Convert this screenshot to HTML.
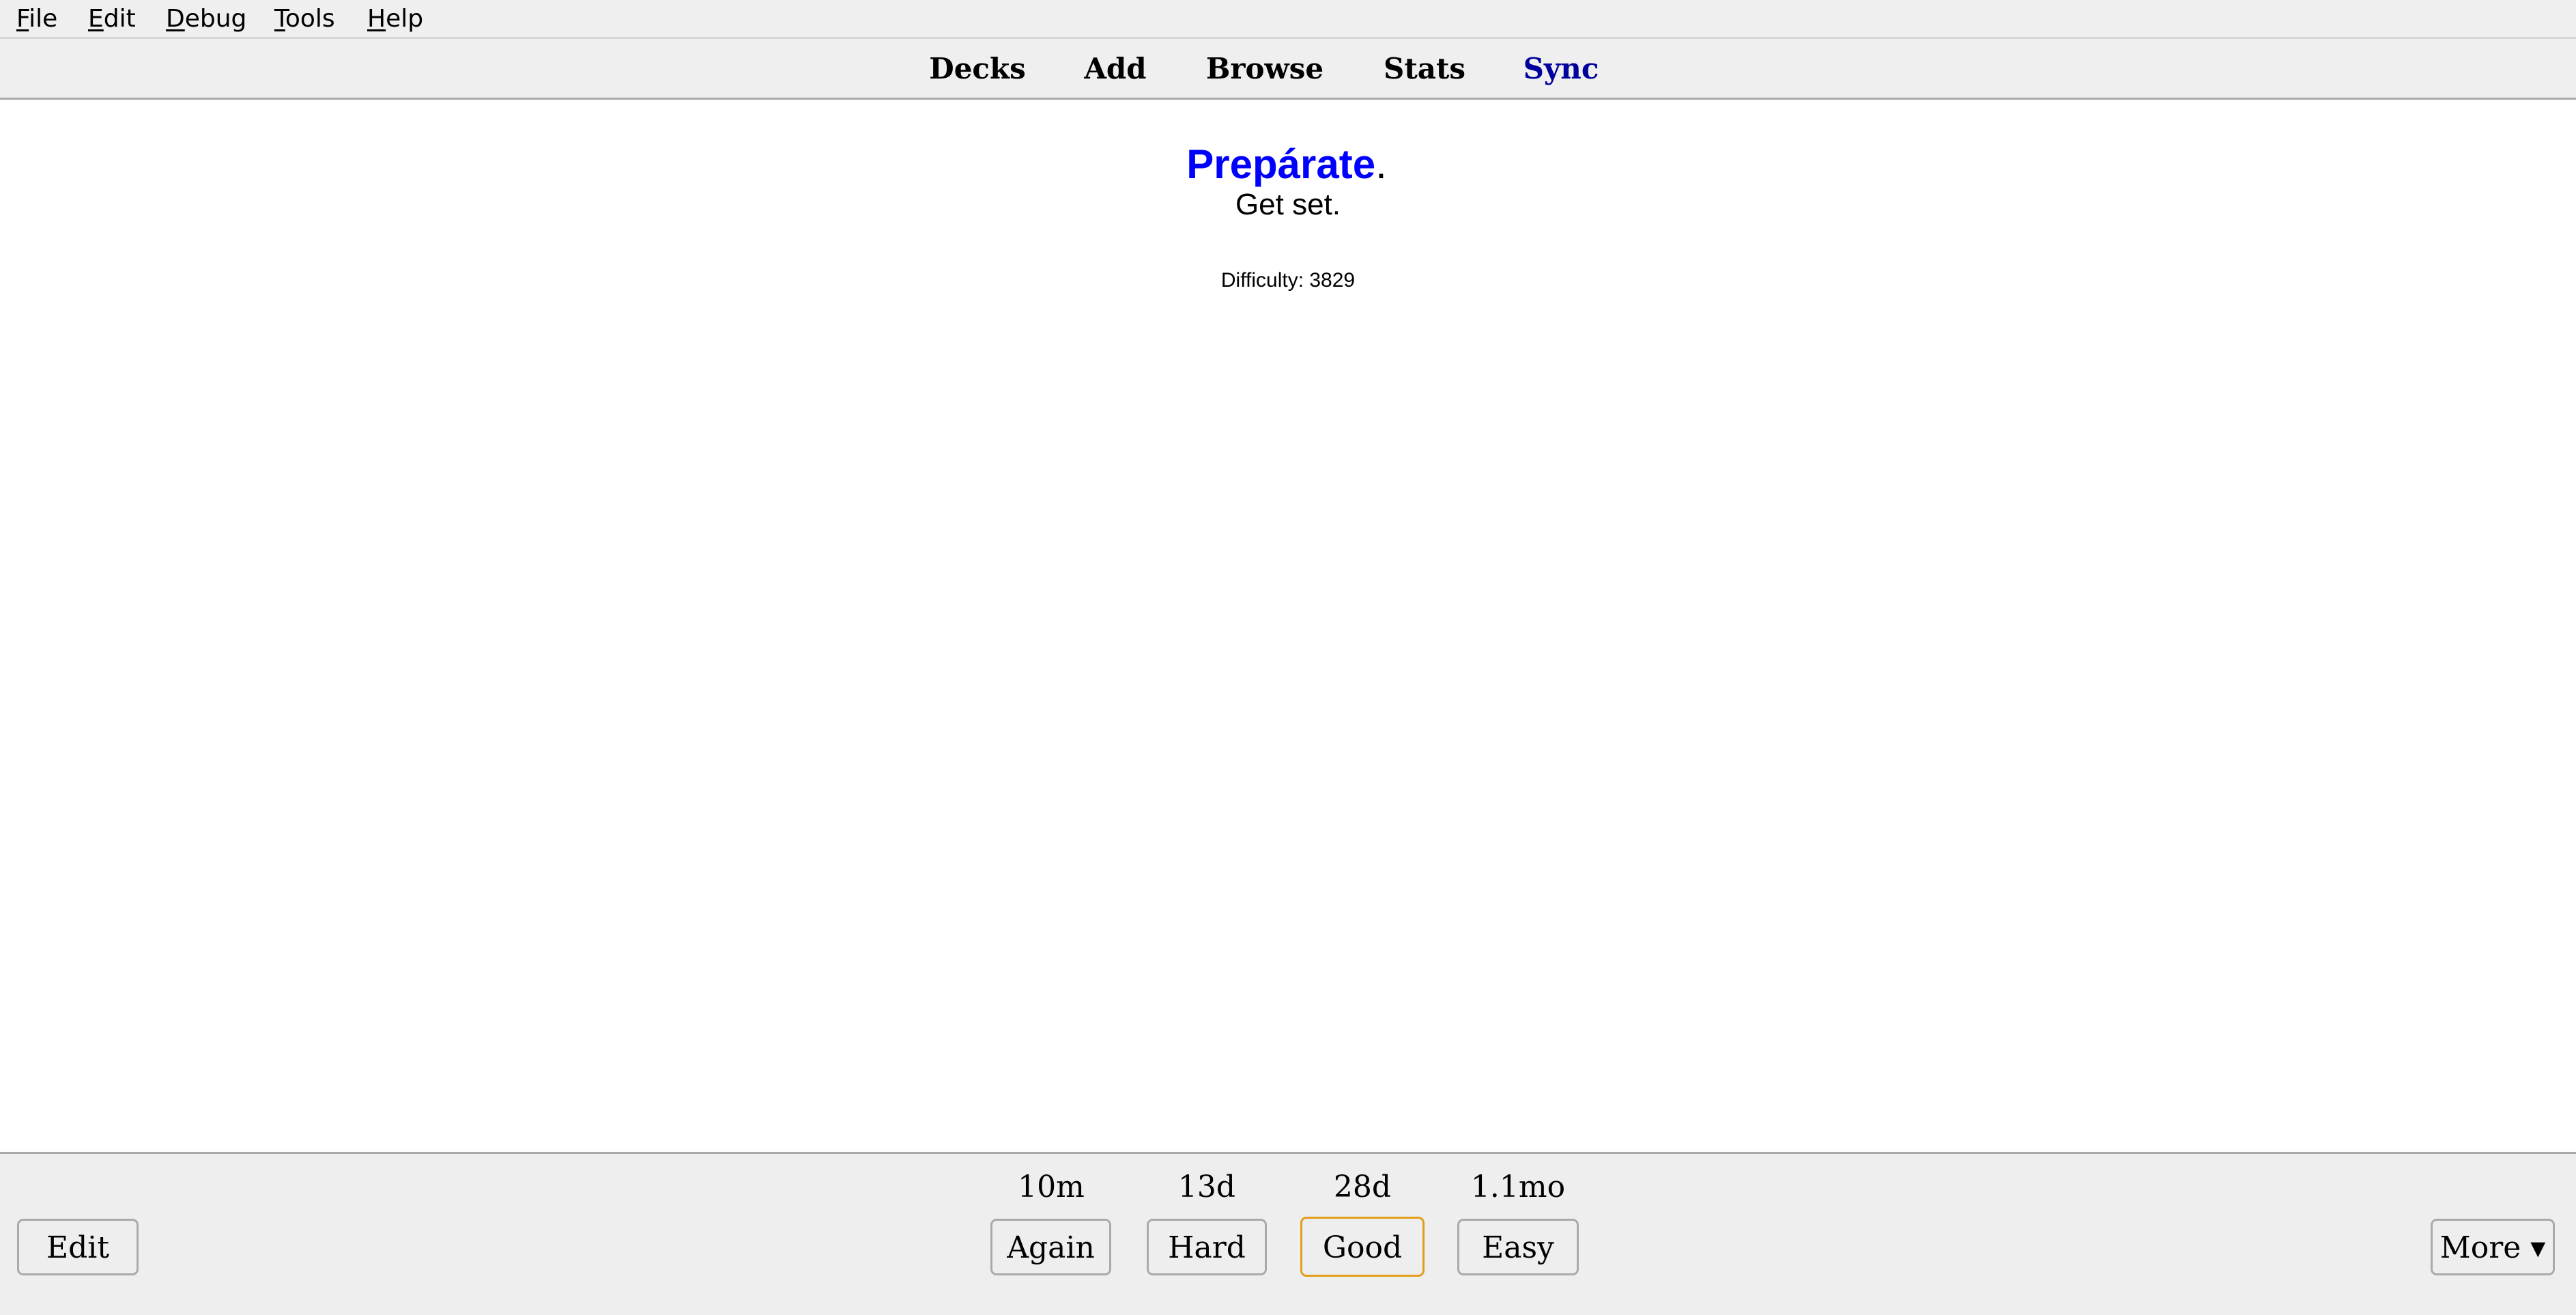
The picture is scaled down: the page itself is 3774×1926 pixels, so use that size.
<!DOCTYPE html>
<html><head><meta charset="utf-8"><style>
html,body{margin:0;padding:0;width:3774px;height:1926px;overflow:hidden;background:#fff;position:relative}
.a{position:absolute;white-space:nowrap;line-height:1}
.menu{font-family:"DejaVu Sans",sans-serif;font-size:36px;color:#000;top:10px}
.menu u{text-decoration:underline;text-underline-offset:4px;text-decoration-thickness:3px}
.tb{font-family:"DejaVu Serif",serif;font-weight:bold;font-size:42px;top:80px;transform:translateX(-50%)}
.c{font-family:"Liberation Sans",sans-serif;left:0;width:3774px;text-align:center}
.lab{font-family:"DejaVu Serif",serif;font-size:44px;top:1717px;transform:translateX(-50%)}
.btn{position:absolute;top:1785px;height:83px;box-sizing:border-box;border:3px solid #aaa;border-radius:9px;background:#eee;font-family:"DejaVu Serif",serif;font-size:44px;display:flex;align-items:center;justify-content:center;padding-top:2px}
</style></head><body>
<div class="a" style="left:0;top:0;width:3774px;height:54px;background:#efefef"></div>
<div class="a" style="left:0;top:54px;width:3774px;height:3px;background:#d6d6d6"></div>
<div class="a" style="left:0;top:57px;width:3774px;height:86px;background:#efefef"></div>
<div class="a" style="left:0;top:143px;width:3774px;height:3px;background:#aaa"></div>
<div class="a menu" style="left:24px"><u>F</u>ile</div>
<div class="a menu" style="left:129px"><u>E</u>dit</div>
<div class="a menu" style="left:243px"><u>D</u>ebug</div>
<div class="a menu" style="left:402px"><u>T</u>ools</div>
<div class="a menu" style="left:538px"><u>H</u>elp</div>
<div class="a tb" style="left:1432px">Decks</div>
<div class="a tb" style="left:1634px">Add</div>
<div class="a tb" style="left:1853px">Browse</div>
<div class="a tb" style="left:2087px">Stats</div>
<div class="a tb" style="left:2287px;color:#00009c">Sync</div>
<div class="a c" style="top:211px;font-size:60px;padding-right:4px;box-sizing:border-box"><b style="color:#00f">Prepárate</b>.</div>
<div class="a c" style="top:278px;font-size:44px">Get set.</div>
<div class="a c" style="top:396px;font-size:30px">Difficulty: 3829</div>
<div class="a" style="left:0;top:1687px;width:3774px;height:3px;background:#aaa"></div>
<div class="a" style="left:0;top:1690px;width:3774px;height:236px;background:#eee"></div>
<div class="a lab" style="left:1540px">10m</div>
<div class="a lab" style="left:1768px">13d</div>
<div class="a lab" style="left:1996px">28d</div>
<div class="a lab" style="left:2224px">1.1mo</div>
<div class="btn" style="left:25px;width:178px">Edit</div>
<div class="btn" style="left:1451px;width:177px">Again</div>
<div class="btn" style="left:1680px;width:176px">Hard</div>
<div class="btn" style="left:1905px;width:182px;top:1782px;height:88px;border-color:#e39e1a">Good</div>
<div class="btn" style="left:2135px;width:178px">Easy</div>
<div class="btn" style="left:3561px;width:182px">More ▾</div>
</body></html>
